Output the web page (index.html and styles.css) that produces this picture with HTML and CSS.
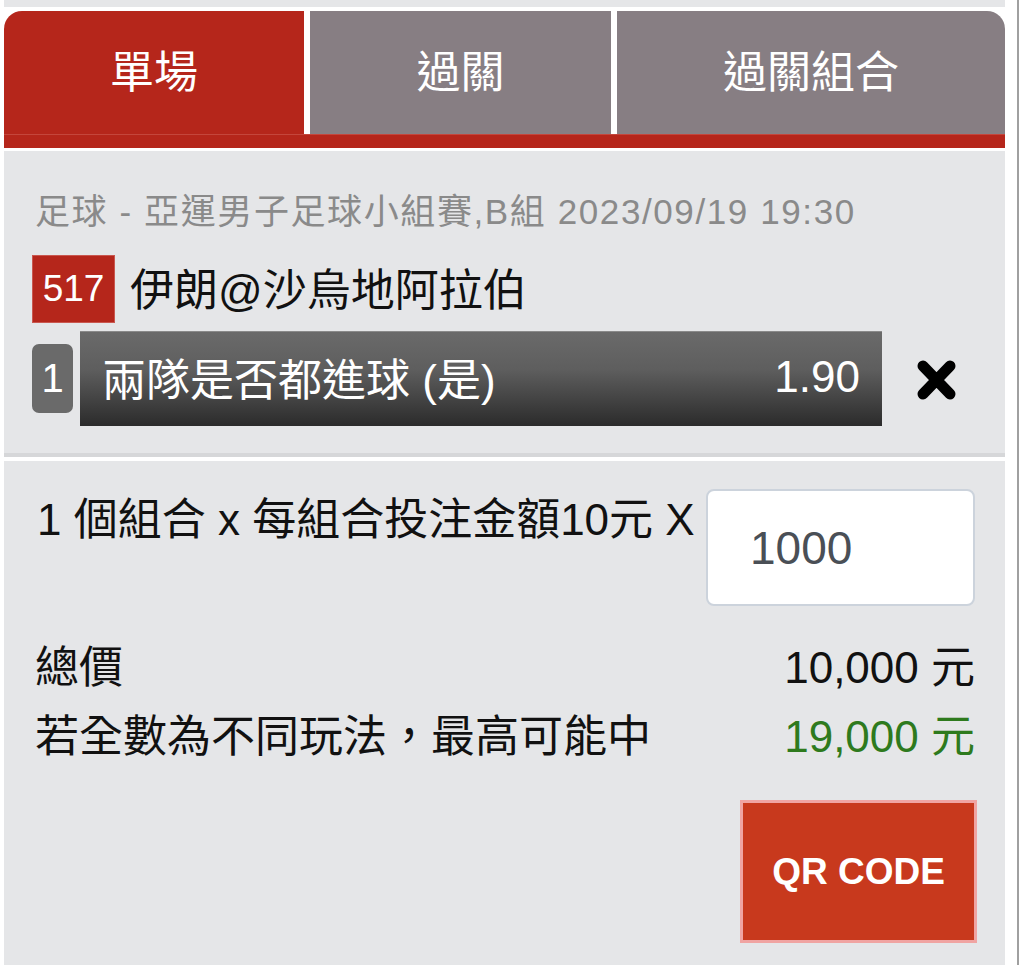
FILE: index.html
```html
<!DOCTYPE html>
<html lang="zh-Hant">
<head>
  <meta charset="UTF-8" />
  <meta name="viewport" content="width=device-width, initial-scale=1.0"/>
  <title>投注單</title>
  <link rel="stylesheet" href="styles.css">
</head>
<body>
  <div class="page">
    <div class="container">
      <div class="top-strip"></div>

      <div class="tabs">
        <div class="tab active">單場</div>
        <div class="tab mid">過關</div>
        <div class="tab last">過關組合</div>
      </div>
      <div class="tab-line"></div>

      <div class="panel bet-panel">
        <div class="league">足球 - 亞運男子足球小組賽,B組 2023/09/19 19:30</div>
        <div class="match">
          <span class="match-no">517</span>
          <span class="teams">伊朗@沙烏地阿拉伯</span>
        </div>
        <div class="bet">
          <span class="bet-no">1</span>
          <div class="bet-bar">
            <span>兩隊是否都進球 (是)</span>
            <span>1.90</span>
          </div>
          <button class="remove" title="移除">
            <svg width="43" height="42" viewBox="0 0 43 42">
              <path d="M8 7 L35 35 M35 7 L8 35" stroke="#000" stroke-width="11" stroke-linecap="round"/>
            </svg>
          </button>
        </div>
      </div>

      <div class="panel sum-panel">
        <div class="stake">
          <span class="stake-text">1 個組合 x 每組合投注金額10元 X</span>
          <input type="text" class="stake-input" value="1000" />
        </div>
        <div class="totals">
          <div class="row">
            <span>總價</span>
            <span>10,000 元</span>
          </div>
          <div class="row">
            <span>若全數為不同玩法，最高可能中</span>
            <span class="win">19,000 元</span>
          </div>
        </div>
        <div class="actions">
          <button class="qr">QR CODE</button>
        </div>
      </div>
    </div>
    <div class="edge"></div>
  </div>
</body>
</html>
```

FILE: styles.css
```css
body {
  margin: 0;
  background: #fff;
  font-family: "Liberation Sans", "Noto Sans CJK TC", sans-serif;
  color: #111;
}

.page {
  display: flex;
  height: 965px;
  overflow: hidden;
}

.container {
  width: 1001px;
  margin-left: 4px;
  display: flex;
  flex-direction: column;
}

.edge {
  width: 2px;
  margin-left: 12px;
  background: #a0a0a0;
}

.top-strip {
  height: 7px;
  background: #e5e6e8;
  margin-bottom: 4px;
}

.tabs {
  display: flex;
  gap: 6px;
  height: 123px;
  border-radius: 18px 18px 0 0;
  overflow: hidden;
}

.tab {
  display: flex;
  align-items: center;
  justify-content: center;
  padding-bottom: 8px;
  font-size: 44px;
  color: #fff;
  background: #877e83;
}

.tab.active {
  width: 300px;
  background: #b5261b;
}

.tab.mid {
  width: 301px;
}

.tab.last {
  flex: 1;
}

.tab-line {
  height: 14px;
  background: #b5261b;
  border-top: 1px solid #c4463c;
  box-sizing: border-box;
  margin-bottom: 3px;
}

.panel {
  background: #e5e6e8;
  padding: 0 30px 0 28px;
}

.bet-panel {
  padding-top: 40px;
  padding-bottom: 27px;
  border-bottom: 4px solid #d6d7d9;
  margin-bottom: 4px;
}

.league {
  font-size: 35px;
  line-height: 42px;
  letter-spacing: 1.6px;
  color: #8a8a8a;
  padding-left: 3px;
  white-space: nowrap;
}

.match {
  display: flex;
  align-items: center;
  margin-top: 22px;
}

.match-no {
  width: 83px;
  height: 68px;
  background: #b5261b;
  color: #fff;
  font-size: 37px;
  display: flex;
  align-items: center;
  justify-content: center;
  box-sizing: border-box;
  border: 1px solid #c9574f;
}

.teams {
  font-size: 44px;
  margin-left: 15px;
  padding-bottom: 4px;
}

.bet {
  display: flex;
  align-items: center;
  margin-top: 8px;
}

.bet-no {
  width: 41px;
  height: 69px;
  border-radius: 7px;
  background: #6a6a6a;
  color: #fff;
  font-size: 40px;
  display: flex;
  align-items: center;
  justify-content: center;
  margin-right: 7px;
}

.bet-bar {
  width: 802px;
  height: 95px;
  box-sizing: border-box;
  display: flex;
  align-items: center;
  justify-content: space-between;
  padding: 0 22px 4px;
  font-size: 44px;
  color: #fff;
  background: linear-gradient(#6a6a6a 0%, #5e5e5e 40%, #2b2b2b 100%);
  border-top: 1px solid #8a8a8a;
}

.remove {
  border: none;
  background: none;
  padding: 0;
  margin-left: 33px;
  margin-top: 2px;
  cursor: pointer;
  display: flex;
}

.sum-panel {
  flex: 1;
  padding-top: 28px;
}

.stake {
  display: flex;
  align-items: flex-start;
  justify-content: space-between;
}

.stake-text {
  font-size: 44px;
  line-height: 62px;
  padding-left: 5px;
}

.stake-input {
  width: 269px;
  height: 117px;
  box-sizing: border-box;
  border: 2px solid #ccd3dc;
  border-radius: 8px;
  background: #fff;
  font-family: "Liberation Sans", sans-serif;
  font-size: 46px;
  color: #4a4f56;
  padding: 0 0 0 42px;
  outline: none;
}

.totals {
  margin-top: 27px;
}

.row {
  display: flex;
  justify-content: space-between;
  font-size: 44px;
  line-height: 69px;
  padding-left: 3px;
}

.win {
  color: #2e7a1d;
}

.actions {
  display: flex;
  justify-content: flex-end;
  margin-top: 29px;
  margin-right: -2px;
}

.qr {
  width: 237px;
  height: 143px;
  box-sizing: border-box;
  border: 3px solid #f0a4a2;
  background: #c8391d;
  color: #fff;
  font-family: "Liberation Sans", sans-serif;
  font-weight: bold;
  font-size: 37px;
  cursor: pointer;
}
```
